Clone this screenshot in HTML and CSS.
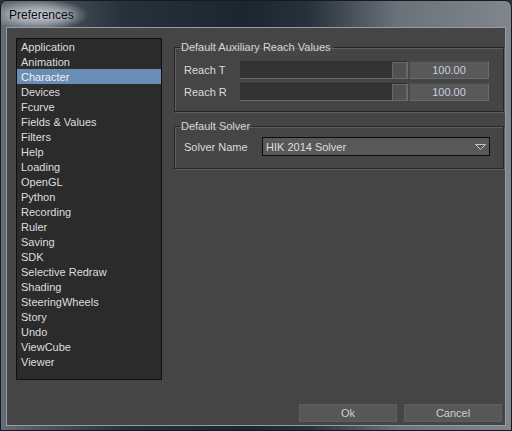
FILE: index.html
```html
<!DOCTYPE html>
<html>
<head>
<meta charset="utf-8">
<link rel="stylesheet" href="styles.css">
</head>
<body>
<div class="window">
  <div class="titlebar"><span class="title">Preferences</span></div>
  <div class="client">
    <div class="main">
      <ul class="list">
        <li>Application</li>
        <li>Animation</li>
        <li class="selected">Character</li>
        <li>Devices</li>
        <li>Fcurve</li>
        <li>Fields &amp; Values</li>
        <li>Filters</li>
        <li>Help</li>
        <li>Loading</li>
        <li>OpenGL</li>
        <li>Python</li>
        <li>Recording</li>
        <li>Ruler</li>
        <li>Saving</li>
        <li>SDK</li>
        <li>Selective Redraw</li>
        <li>Shading</li>
        <li>SteeringWheels</li>
        <li>Story</li>
        <li>Undo</li>
        <li>ViewCube</li>
        <li>Viewer</li>
      </ul>
      <div class="panel">
        <fieldset class="group group-reach">
          <legend>Default Auxiliary Reach Values</legend>
          <div class="row">
            <span class="label">Reach T</span>
            <div class="slider"><div class="handle"></div></div>
            <div class="value">100.00</div>
          </div>
          <div class="row">
            <span class="label">Reach R</span>
            <div class="slider"><div class="handle"></div></div>
            <div class="value">100.00</div>
          </div>
        </fieldset>
        <fieldset class="group group-solver">
          <legend>Default Solver</legend>
          <div class="row row-combo">
            <span class="label label-wide">Solver Name</span>
            <div class="combo">
              <span class="combo-text">HIK 2014 Solver</span>
              <svg class="combo-arrow" width="11" height="6" viewBox="0 0 11 6"><polygon points="0.5,0.5 10.5,0.5 5.5,5.5" fill="none" stroke="#c4c4c4" stroke-width="1"/></svg>
            </div>
          </div>
        </fieldset>
      </div>
    </div>
    <div class="footer">
      <button class="btn">Ok</button>
      <button class="btn">Cancel</button>
    </div>
  </div>
</div>
</body>
</html>
```
FILE: styles.css
```css
html, body {
  margin: 0;
  padding: 0;
  background: #2a323a;
}

.window {
  width: 512px;
  height: 431px;
  box-sizing: border-box;
  border: 1px solid #161b21;
  border-radius: 7px 7px 0 0;
  background: linear-gradient(90deg, #646d76 0%, #49525c 10%, #27313b 24%, #1c2630 48%, #27313b 60%, #6b727a 78%, #80868c 100%);
  display: flex;
  flex-direction: column;
  overflow: hidden;
  font-family: "Liberation Sans", Arial, sans-serif;
  font-size: 11px;
}

.titlebar {
  height: 26px;
  flex: none;
  display: flex;
  align-items: center;
  padding-left: 8px;
  background: radial-gradient(ellipse 50px 16px at 38px 14px, rgba(205,210,216,0.92) 0%, rgba(190,196,202,0.6) 55%, rgba(190,196,202,0) 100%);
}

.title {
  font-family: "Liberation Sans", Arial, sans-serif;
  font-size: 12px;
  color: #0a0d10;
  text-shadow: 0 0 6px rgba(255,255,255,0.6);
  margin-top: 2px;
}

.client {
  flex: 1;
  margin: 0 5px 4px 5px;
  border: 1px solid #959ca2;
  background: #454545;
  display: flex;
  flex-direction: column;
  color: #dcdcdc;
}

.main {
  display: flex;
  align-items: flex-start;
}

.list {
  list-style: none;
  margin: 10px 0 0 9px;
  padding: 0;
  width: 146px;
  height: 342px;
  box-sizing: border-box;
  border: 1px solid #0f0f0f;
  background: #2b2b2b;
  flex: none;
}

.list li {
  height: 15px;
  box-sizing: border-box;
  padding: 1px 0 0 4px;
  line-height: 14px;
  color: #dedede;
  white-space: nowrap;
}

.list li.selected {
  background: #6a8db6;
  color: #f0f0f0;
}

.panel {
  flex: 1;
  margin: 12px 1px 0 12px;
  display: flex;
  flex-direction: column;
}

.group {
  margin: 0;
  padding: 7px 0 10px 9px;
  border: 1px solid #262626;
  box-shadow: inset 1px 1px 0 #5e5e5e, 1px 1px 0 #5e5e5e;
  min-width: 0;
}

.group legend {
  margin-left: -4px;
  padding: 0 2px 0 1px;
  line-height: 14px;
  height: 14px;
  color: #d6d6d6;
  font-size: 11px;
}

.group-solver {
  margin-top: 7px;
  padding: 4px 0 12px 9px;
}

.row {
  display: flex;
  align-items: center;
  height: 18px;
}

.row + .row {
  margin-top: 4px;
}

.row-combo {
  height: 19px;
}

.label {
  width: 56px;
  flex: none;
  color: #dcdcdc;
  white-space: nowrap;
}

.label-wide {
  width: 78px;
}

.slider {
  width: 168px;
  height: 18px;
  box-sizing: border-box;
  background: #333333;
  border-top: 1px solid #2c2c2c;
  border-bottom: 1px solid #6a6a6a;
  border-right: 1px solid #6a6a6a;
  display: flex;
  justify-content: flex-end;
  align-items: center;
  flex: none;
}

.handle {
  width: 15px;
  height: 16px;
  box-sizing: border-box;
  background: #515151;
  border: 1px solid #686868;
  border-bottom: none;
}

.value {
  width: 80px;
  height: 18px;
  box-sizing: border-box;
  margin-left: 1px;
  background: #595959;
  border-top: 1px solid #4b4b4b;
  border-left: 1px solid #4b4b4b;
  border-bottom: 1px solid #6b6b6b;
  border-right: 1px solid #6b6b6b;
  color: #c8d2de;
  text-align: center;
  line-height: 16px;
  flex: none;
}

.combo {
  width: 228px;
  height: 19px;
  box-sizing: border-box;
  border: 1px solid #0d0d0d;
  background: #585858;
  display: flex;
  align-items: center;
  justify-content: space-between;
  padding: 0 3px 0 3px;
  flex: none;
}

.combo-text {
  color: #dedede;
}

.combo-arrow {
  display: block;
  margin-top: 1px;
}

.footer {
  margin-top: auto;
  display: flex;
  justify-content: flex-end;
  gap: 7px;
  padding: 0 3px 3px 0;
}

.btn {
  width: 98px;
  height: 18px;
  margin: 0;
  padding: 0;
  box-sizing: border-box;
  border: 1px solid #5f5f5f;
  background: #575757;
  color: #cfcfcf;
  font-family: "Liberation Sans", Arial, sans-serif;
  font-size: 11px;
  line-height: 16px;
}
```
